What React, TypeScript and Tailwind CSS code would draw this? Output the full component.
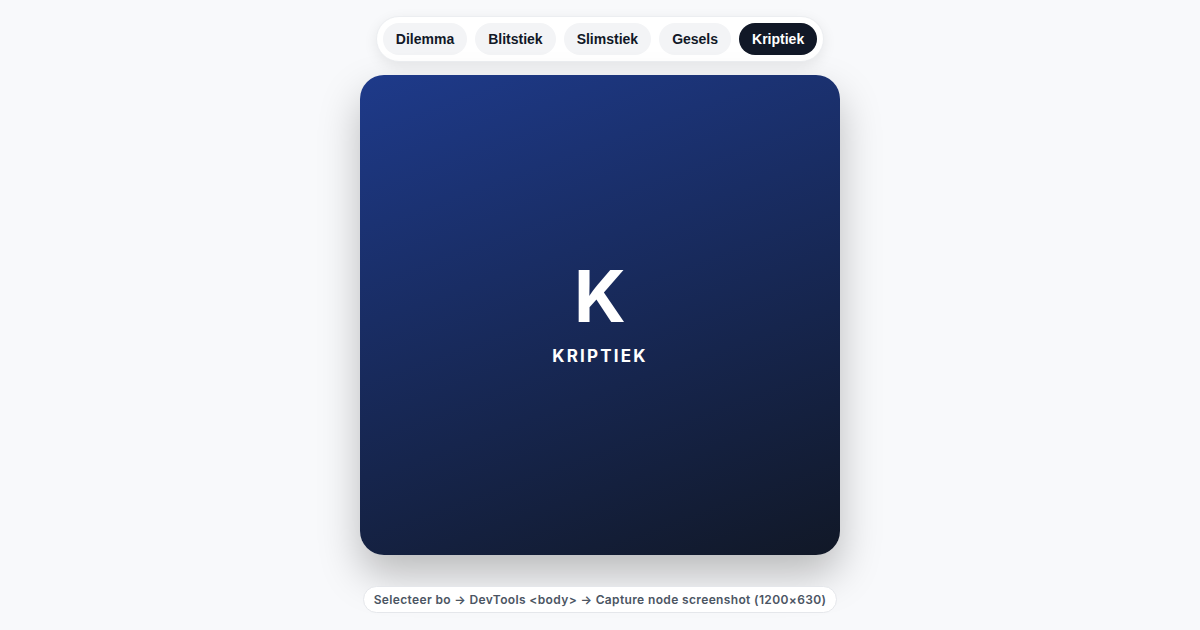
import React, { useState } from 'react';

const tabs = ['Dilemma', 'Blitstiek', 'Slimstiek', 'Gesels', 'Kriptiek'];

const App: React.FC = () => {
  const [active, setActive] = useState<string>('Kriptiek');

  return (
    <div className="min-h-screen w-full bg-[#f8f9fb] flex flex-col items-center pt-[16px]">
      <div className="flex items-center gap-2 p-[6px] bg-white rounded-full shadow-[0_4px_14px_rgba(0,0,0,0.08)] border border-[#eceef1]">
        {tabs.map((t) => (
          <button
            key={t}
            onClick={() => setActive(t)}
            className={
              t === active
                ? "h-8 px-[13px] rounded-full bg-[#111827] text-white text-[14px] font-bold font-['Liberation_Sans',Arial,sans-serif]"
                : "h-8 px-[13px] rounded-full bg-[#f3f4f6] text-[#111827] text-[14px] font-bold font-['Liberation_Sans',Arial,sans-serif]"
            }
          >
            {t}
          </button>
        ))}
      </div>

      <div className="mt-[13px] w-[480px] h-[480px] rounded-[24px] bg-[linear-gradient(160deg,#1e3a8a,#111827)] shadow-[0_20px_40px_rgba(0,0,0,0.25)] flex flex-col items-center justify-center">
        <div className="text-white text-[72px] leading-none font-bold font-['Inter',sans-serif]">K</div>
        <div className="mt-[12px] text-white text-[17px] font-bold tracking-[0.13em] font-['Inter',sans-serif]">KRIPTIEK</div>
      </div>

      <div className="mt-[31px] px-[10px] h-[27px] flex items-center rounded-full bg-white border border-[#e5e7eb] text-[12px] font-semibold tracking-[0.03em] text-[#4b5563] font-['Inter',sans-serif]">
        Selecteer bo → DevTools &lt;body&gt; → Capture node screenshot (1200×630)
      </div>
    </div>
  );
};

export default App;
